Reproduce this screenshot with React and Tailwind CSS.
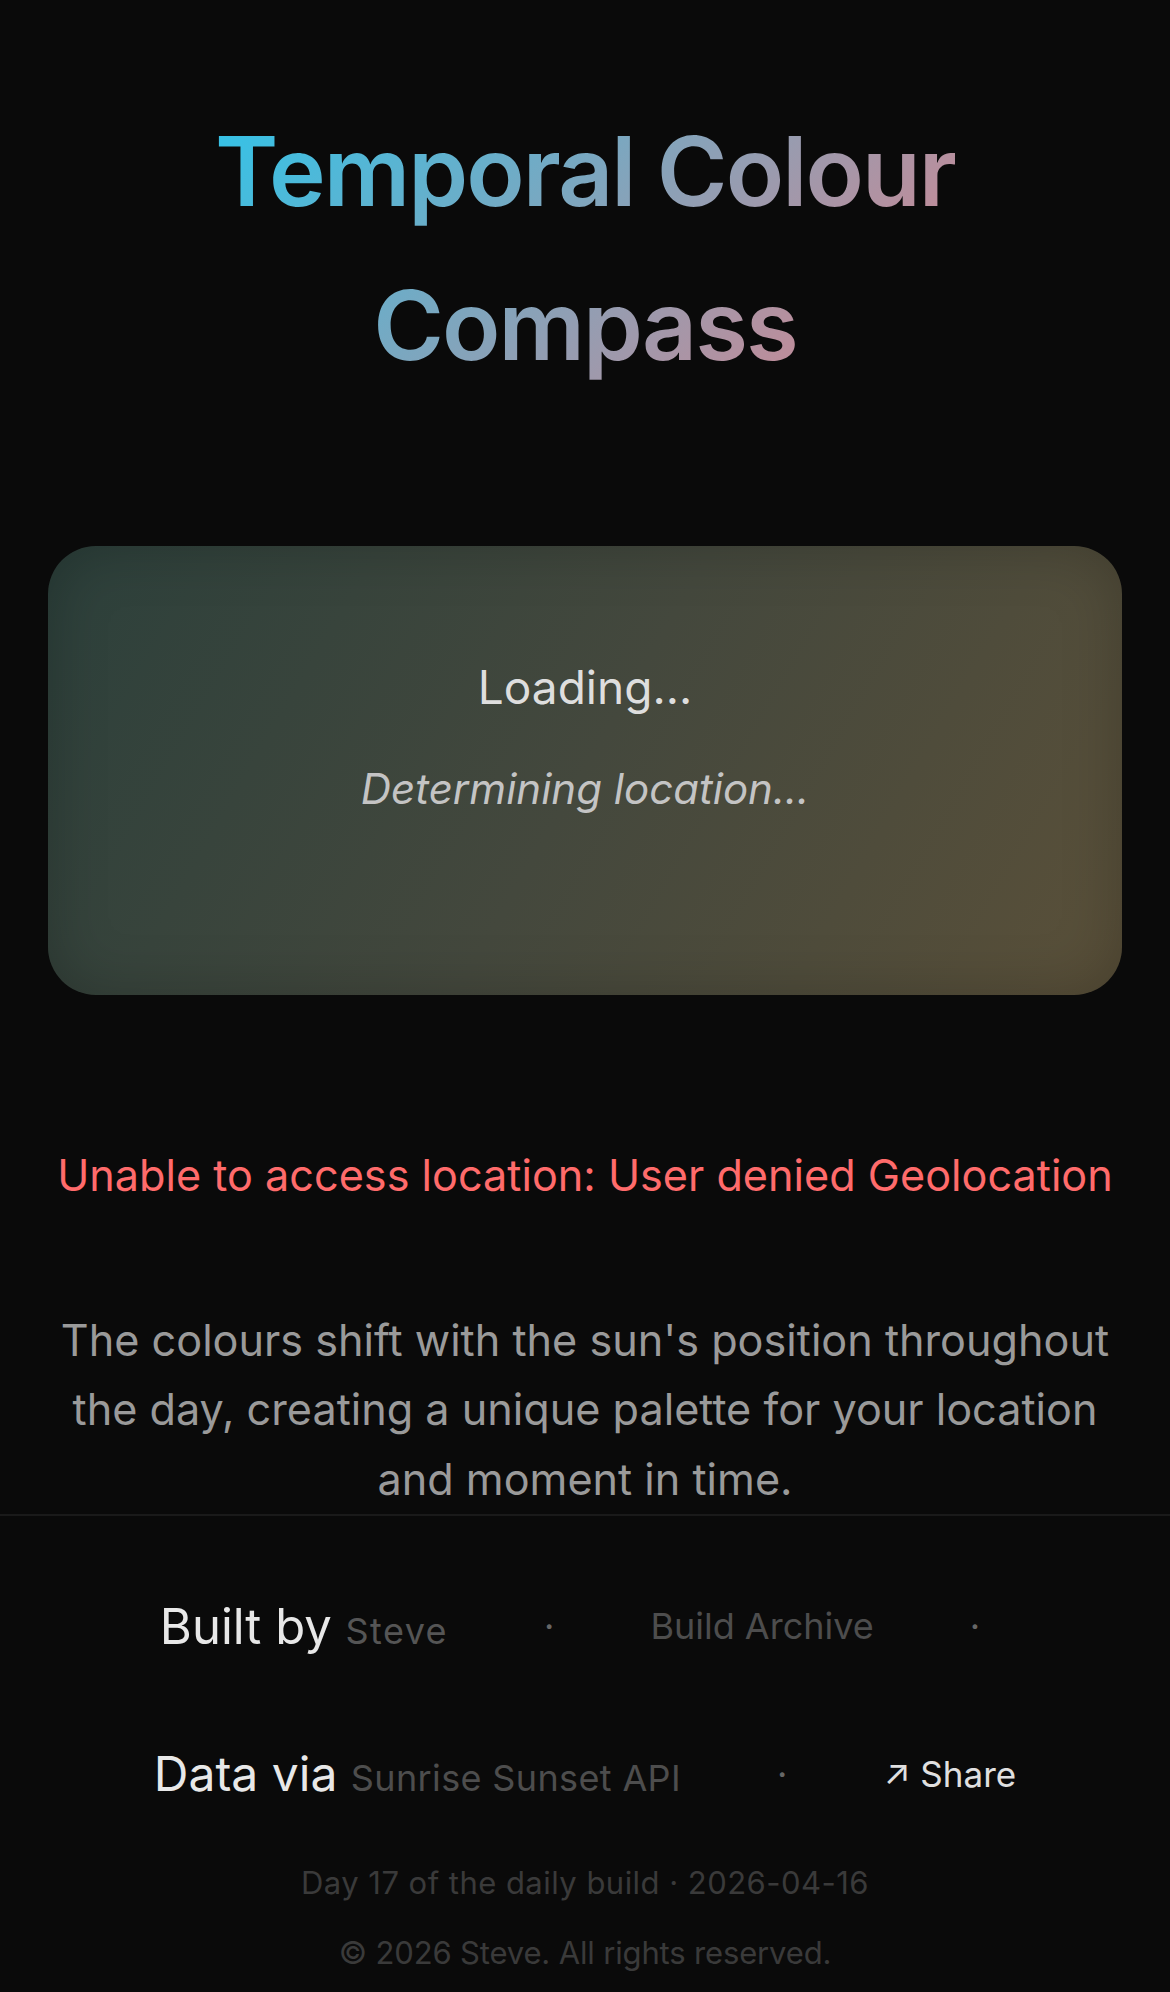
export default function App() {
  return (
    <div
      className="min-h-screen bg-[#0a0a0a] text-[#e5e5e5]"
      style={{ fontFamily: "Inter, 'Noto Sans', sans-serif" }}
    >
      <main className="px-12 pt-[95px] text-center">
        <h1 className="bg-[linear-gradient(135deg,#36c2e6_15%,#bb8e9c_72%)] bg-clip-text text-[96px] font-semibold leading-[1.6] tracking-[-0.02em] text-transparent">
          Temporal Colour Compass
        </h1>

        <div className="mt-[144px] h-[449px] rounded-[48px] bg-[linear-gradient(120deg,#2c403b,#44483d_50%,#5a5039)] pt-[103px] shadow-[inset_0_0_60px_rgba(0,0,0,0.22)]">
          <p className="text-[46px] leading-[1.67] text-[#dedede]">
            Loading...
          </p>
          <p className="mt-[32px] text-[42px] italic leading-[1.46] text-[#c4c4c4]">
            Determining location...
          </p>
        </div>

        <p className="mt-[146px] text-[43.2px] leading-[1.6] text-[#ff6b6b]">
          Unable to access location: User denied Geolocation
        </p>

        <p className="mt-[96px] text-[43.2px] leading-[1.6] text-[#9a9a9a]">
          The colours shift with the sun's position throughout the day,
          creating a unique palette for your location and moment in time.
        </p>
      </main>

      <footer className="border-t-[2px] border-[#1a1a1a] px-12 pt-[72px] text-center">
        <div className="flex flex-wrap items-center justify-center gap-x-24 gap-y-[70px]">
          <p className="text-[49px] leading-[1.6] text-[#e8e8e8]">
            Built by{" "}
            <a className="text-[36px] tracking-[0.04em] text-[#555555]">
              Steve
            </a>
          </p>
          <span className="text-[36px] leading-[1.6] text-[#666666]">·</span>
          <a className="text-[36px] leading-[1.6] text-[#4d4d4d]">
            Build Archive
          </a>
          <span className="mr-[30px] text-[36px] leading-[1.6] text-[#666666]">
            ·
          </span>
          <p className="text-[48px] leading-[1.6] text-[#e8e8e8]">
            Data via{" "}
            <a className="text-[36px] tracking-[0.01em] text-[#4d4d4d]">
              Sunrise Sunset API
            </a>
          </p>
          <span className="text-[36px] leading-[1.6] text-[#666666]">·</span>
          <button className="text-[35px] leading-[1.6] text-[#e0e0e0]">
            ↗ Share
          </button>
        </div>

        <p className="mt-[45px] text-[31px] leading-[1.6] tracking-[0.015em] text-[#3a3a3a]">
          Day 17 of the daily build · 2026-04-16
        </p>
        <p className="mt-[21px] pb-4 text-[31px] leading-[1.6] tracking-[-0.005em] text-[#3a3a3a]">
          © 2026 Steve. All rights reserved.
        </p>
      </footer>
    </div>
  );
}
